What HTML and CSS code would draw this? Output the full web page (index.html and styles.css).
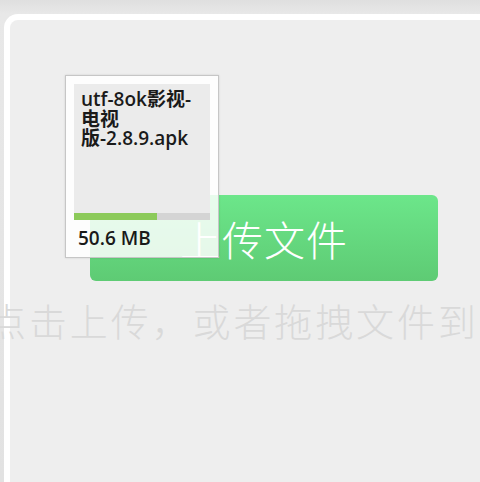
FILE: index.html
```html
<!DOCTYPE html>
<html lang="zh-CN">
<head>
  <meta charset="UTF-8">
  <meta name="viewport" content="width=device-width, initial-scale=1.0">
  <title>上传文件</title>
  <link rel="stylesheet" href="styles.css">
</head>
<body>
  <div class="frame">
    <div class="drop-zone">
      <button class="upload-btn">上传文件</button>
      <p class="hint">点击上传，或者拖拽文件到</p>

      <div class="drag-file">
        <div class="file-thumb">
          <div class="file-name">utf-8ok影视-<br>电视<br>版-2.8.9.apk</div>
          <div class="progress"><div class="progress-fill" style="width: 61%"></div></div>
        </div>
        <div class="file-size">50.6 MB</div>
      </div>
    </div>
  </div>
</body>
</html>
```

FILE: styles.css
```css
html, body { margin: 0; overflow: hidden; }
body {
  display: flex;
  height: 100vh;
  padding: 14px 0 0 4px;
  box-sizing: border-box;
  background: linear-gradient(#dfdfdf, #e8e8e8 14px, #e2e2e2);
  font-family: "Noto Sans CJK SC", "Noto Sans", sans-serif;
}
.frame {
  flex: 1;
  min-width: 0;
  border-top: 6px solid #fff;
  border-left: 6px solid #fff;
  border-top-left-radius: 14px;
  background: #eeeeee;
}
.drop-zone { position: relative; padding-top: 175px; }
.upload-btn {
  display: flex; align-items: center; justify-content: center;
  margin-left: 80px; width: 348px; height: 86px;
  border: none; border-radius: 6px;
  background: linear-gradient(#6ce68a, #5ecb74);
  color: #fff; font-family: inherit; font-size: 41px; font-weight: 300; letter-spacing: 1px;
  padding: 0;
}
.hint {
  margin: 19px 0 0 -22px;
  white-space: nowrap;
  font-size: 38px; line-height: 40px; font-weight: 300; letter-spacing: 2.9px;
  color: #d9d9d9;
}
.drag-file {
  position: absolute; left: 55px; top: 55px;
  width: 136px; padding: 8px;
  border: 1px solid #c6c6c6;
  background: rgba(255, 255, 255, 0.84);
  box-shadow: 0 0 2px rgba(0, 0, 0, 0.12);
  font-family: "Open Sans", "Noto Sans CJK SC", sans-serif;
}
.file-thumb {
  display: flex; flex-direction: column; justify-content: space-between;
  height: 136px; background: #ebebeb;
}
.file-name {
  padding: 6px 2px 0 7px;
  font-size: 19px; line-height: 19.5px; font-weight: 600; color: #1a1a1a;
}
.progress { height: 7px; background: #d4d4d4; }
.progress-fill { height: 100%; background: #8cca5a; }
.file-size {
  margin-top: 8px; padding-left: 4px;
  font-size: 19px; line-height: 21px; font-weight: 600; color: #1a1a1a;
}
```
